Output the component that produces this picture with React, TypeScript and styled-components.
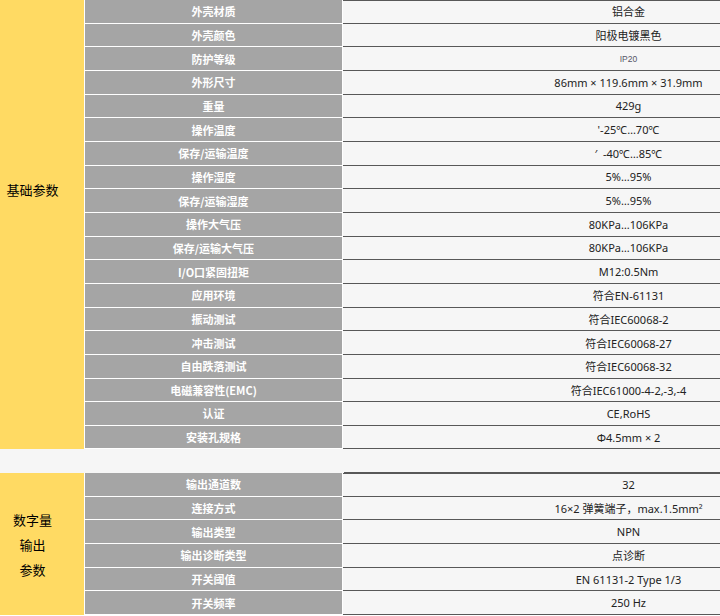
import { JSX } from 'react';
import styled, { createGlobalStyle } from 'styled-components';

const GlobalStyle = createGlobalStyle`
  html, body {
    margin: 0;
    padding: 0;
    background: #ffffff;
    overflow: hidden;
  }
  body {
    font-family: "Noto Sans", "Noto Sans CJK SC", sans-serif;
  }
`;

const ROW_H = '23.67px';

interface SpecRow {
  label: string;
  value: string;
  small?: boolean;
}

const basicRows: SpecRow[] = [
  { label: '外壳材质', value: '铝合金' },
  { label: '外壳颜色', value: '阳极电镀黑色' },
  { label: '防护等级', value: 'IP20', small: true },
  { label: '外形尺寸', value: '86mm × 119.6mm × 31.9mm' },
  { label: '重量', value: '429g' },
  { label: '操作温度', value: "'-25℃…70℃" },
  { label: '保存/运输温度', value: '′  -40℃…85℃' },
  { label: '操作湿度', value: '5%…95%' },
  { label: '保存/运输湿度', value: '5%…95%' },
  { label: '操作大气压', value: '80KPa…106KPa' },
  { label: '保存/运输大气压', value: '80KPa…106KPa' },
  { label: 'I/O口紧固扭矩', value: 'M12:0.5Nm' },
  { label: '应用环境', value: '符合EN-61131' },
  { label: '振动测试', value: '符合IEC60068-2' },
  { label: '冲击测试', value: '符合IEC60068-27' },
  { label: '自由跌落测试', value: '符合IEC60068-32' },
  { label: '电磁兼容性(EMC)', value: '符合IEC61000-4-2,-3,-4' },
  { label: '认证', value: 'CE,RoHS' },
  { label: '安装孔规格', value: 'Φ4.5mm × 2' },
];

const outputRows: SpecRow[] = [
  { label: '输出通道数', value: '32' },
  { label: '连接方式', value: '16×2 弹簧端子，max.1.5mm²' },
  { label: '输出类型', value: 'NPN' },
  { label: '输出诊断类型', value: '点诊断' },
  { label: '开关阈值', value: 'EN 61131-2 Type 1/3' },
  { label: '开关频率', value: '250 Hz' },
];

const Table = styled.div`
  width: 933px;
  margin-left: -19px;
  display: flex;
  flex-direction: column;
`;

const Section = styled.div`
  display: flex;
`;

const Category = styled.div<{ $shift?: number }>`
  width: 103px;
  margin-right: 1px;
  background: #ffda63;
  display: flex;
  align-items: center;
  justify-content: center;
  text-align: center;
  box-sizing: border-box;
  padding-bottom: ${(p) => p.$shift ?? 0}px;
  color: #000;
  font-size: 13px;
  line-height: 25px;
  font-family: "Noto Sans CJK SC", sans-serif;
`;

const Rows = styled.div`
  flex: 1;
  display: flex;
  flex-direction: column;
`;

const Row = styled.div`
  display: flex;
  height: ${ROW_H};
  &:first-child > div:last-child {
    box-shadow: inset 0 1px 0 #585858;
  }
`;

const Label = styled.div`
  width: 257px;
  margin-right: 1px;
  background: #a5a5a5;
  border-bottom: 1px solid #ffffff;
  box-sizing: border-box;
  display: flex;
  align-items: center;
  justify-content: center;
  color: #ffffff;
  font-weight: 700;
  font-size: 11px;
  font-family: "Noto Sans CJK SC", sans-serif;
`;

const Value = styled.div<{ $small?: boolean }>`
  flex: 1;
  background: #f6f6f6;
  border-bottom: 1px solid #585858;
  box-sizing: border-box;
  display: flex;
  align-items: center;
  justify-content: center;
  color: ${(p) => (p.$small ? '#556' : '#222')};
  font-family: ${(p) => (p.$small ? '"Liberation Sans", Arial' : '"Noto Sans"')}, "Noto Sans CJK SC", sans-serif;
  font-size: ${(p) => (p.$small ? '8.5px' : '11px')};
  white-space: pre;
`;

const Spacer = styled.div`
  display: flex;
  height: ${ROW_H};
  background: #f6f6f6;
`;

const SpacerValue = styled.div`
  margin-left: 363px;
  flex: 1;
  border-bottom: 1px solid #585858;
`;

const SpecRows = ({ rows }: { rows: SpecRow[] }): JSX.Element => (
  <Rows>
    {rows.map((r) => (
      <Row key={r.label}>
        <Label>{r.label}</Label>
        <Value $small={r.small}>{r.value}</Value>
      </Row>
    ))}
  </Rows>
);

export default function App(): JSX.Element {
  return (
    <>
      <GlobalStyle />
      <Table>
        <Section>
          <Category $shift={70}>基础参数</Category>
          <SpecRows rows={basicRows} />
        </Section>
        <Spacer>
          <SpacerValue />
        </Spacer>
        <Section>
          <Category>
            数字量
            <br />
            输出
            <br />
            参数
          </Category>
          <SpecRows rows={outputRows} />
        </Section>
      </Table>
    </>
  );
}
